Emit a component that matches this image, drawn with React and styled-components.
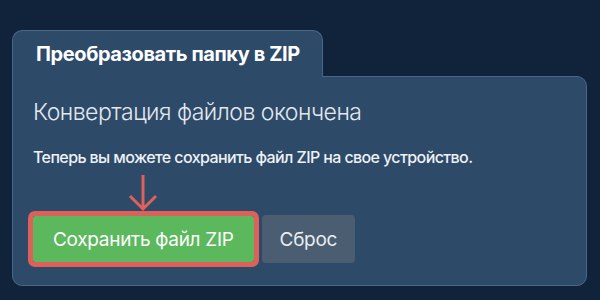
import React from 'react';
import styled, { createGlobalStyle } from 'styled-components';

const GlobalStyle = createGlobalStyle`
	html, body {
		margin: 0;
		padding: 0;
		background: #11233a;
		font-family: Inter, "Noto Sans", sans-serif;
	}
`;

export default function App() {
	return (
		<>
			<GlobalStyle />
			<Page>
				<Card>
					<Tab>Преобразовать папку в ZIP</Tab>
					<Panel>
						<Heading>Конвертация файлов окончена</Heading>
						<Text>Теперь вы можете сохранить файл ZIP на свое устройство.</Text>
						<Actions>
							<Highlight>
								<Arrow width="30" height="38" viewBox="0 0 30 38">
									<path d="M15 1 V35 M2 22 L15 35 L28 22" fill="none" stroke="#e0605a" strokeWidth="3" />
								</Arrow>
								<SaveButton>Сохранить файл ZIP</SaveButton>
							</Highlight>
							<ResetButton>Сброс</ResetButton>
						</Actions>
					</Panel>
				</Card>
			</Page>
		</>
	);
}

const Page = styled.div`
	padding: 30px 13px 14px 12px;
`;

const Card = styled.div`
	display: flex;
	flex-direction: column;
	align-items: flex-start;
`;

const Tab = styled.div`
	position: relative;
	z-index: 1;
	height: 46px;
	display: flex;
	align-items: center;
	padding: 0 22px 0 23px;
	margin-bottom: -1px;
	background: #2d4a69;
	border: 1px solid #4a6685;
	border-bottom: none;
	border-radius: 10px 10px 0 0;
	color: #ffffff;
	font-size: 20px;
	font-weight: 700;
	letter-spacing: -0.4px;
`;

const Panel = styled.div`
	align-self: stretch;
	background: #2d4a69;
	border: 1px solid #4a6685;
	border-radius: 0 10px 10px 10px;
	padding: 21px 20px 22px 20px;
`;

const Heading = styled.h2`
	margin: 0;
	color: #e3e8ef;
	font-size: 23px;
	font-weight: 300;
	line-height: 28px;
	letter-spacing: -0.5px;
`;

const Text = styled.p`
	margin: 21px 0 0;
	color: #eef1f5;
	font-size: 16px;
	font-weight: 500;
	line-height: 20px;
	letter-spacing: -0.6px;
`;

const Actions = styled.div`
	display: flex;
	align-items: center;
	gap: 10px;
	margin-top: 48px;
`;

const Highlight = styled.div`
	position: relative;
	display: flex;
`;

const Arrow = styled.svg`
	position: absolute;
	left: 50%;
	bottom: 100%;
	margin-left: -15px;
	margin-bottom: 4px;
`;

const Button = styled.button`
	border: none;
	height: 47px;
	padding: 0 18px;
	border-radius: 4px;
	font-family: Inter, "Noto Sans", sans-serif;
	font-size: 19px;
	font-weight: 400;
	letter-spacing: -0.3px;
	cursor: pointer;
`;

const SaveButton = styled(Button)`
	background: #5cb85c;
	color: #ffffff;
	outline: 5px solid #dd605a;
	outline-offset: 0;
	border-radius: 2px;
	padding: 0 20px;
	height: 46px;
`;

const ResetButton = styled(Button)`
	background: #4b5d70;
	color: #e8edf2;
	height: 48px;
	margin-left: -2px;
`;
